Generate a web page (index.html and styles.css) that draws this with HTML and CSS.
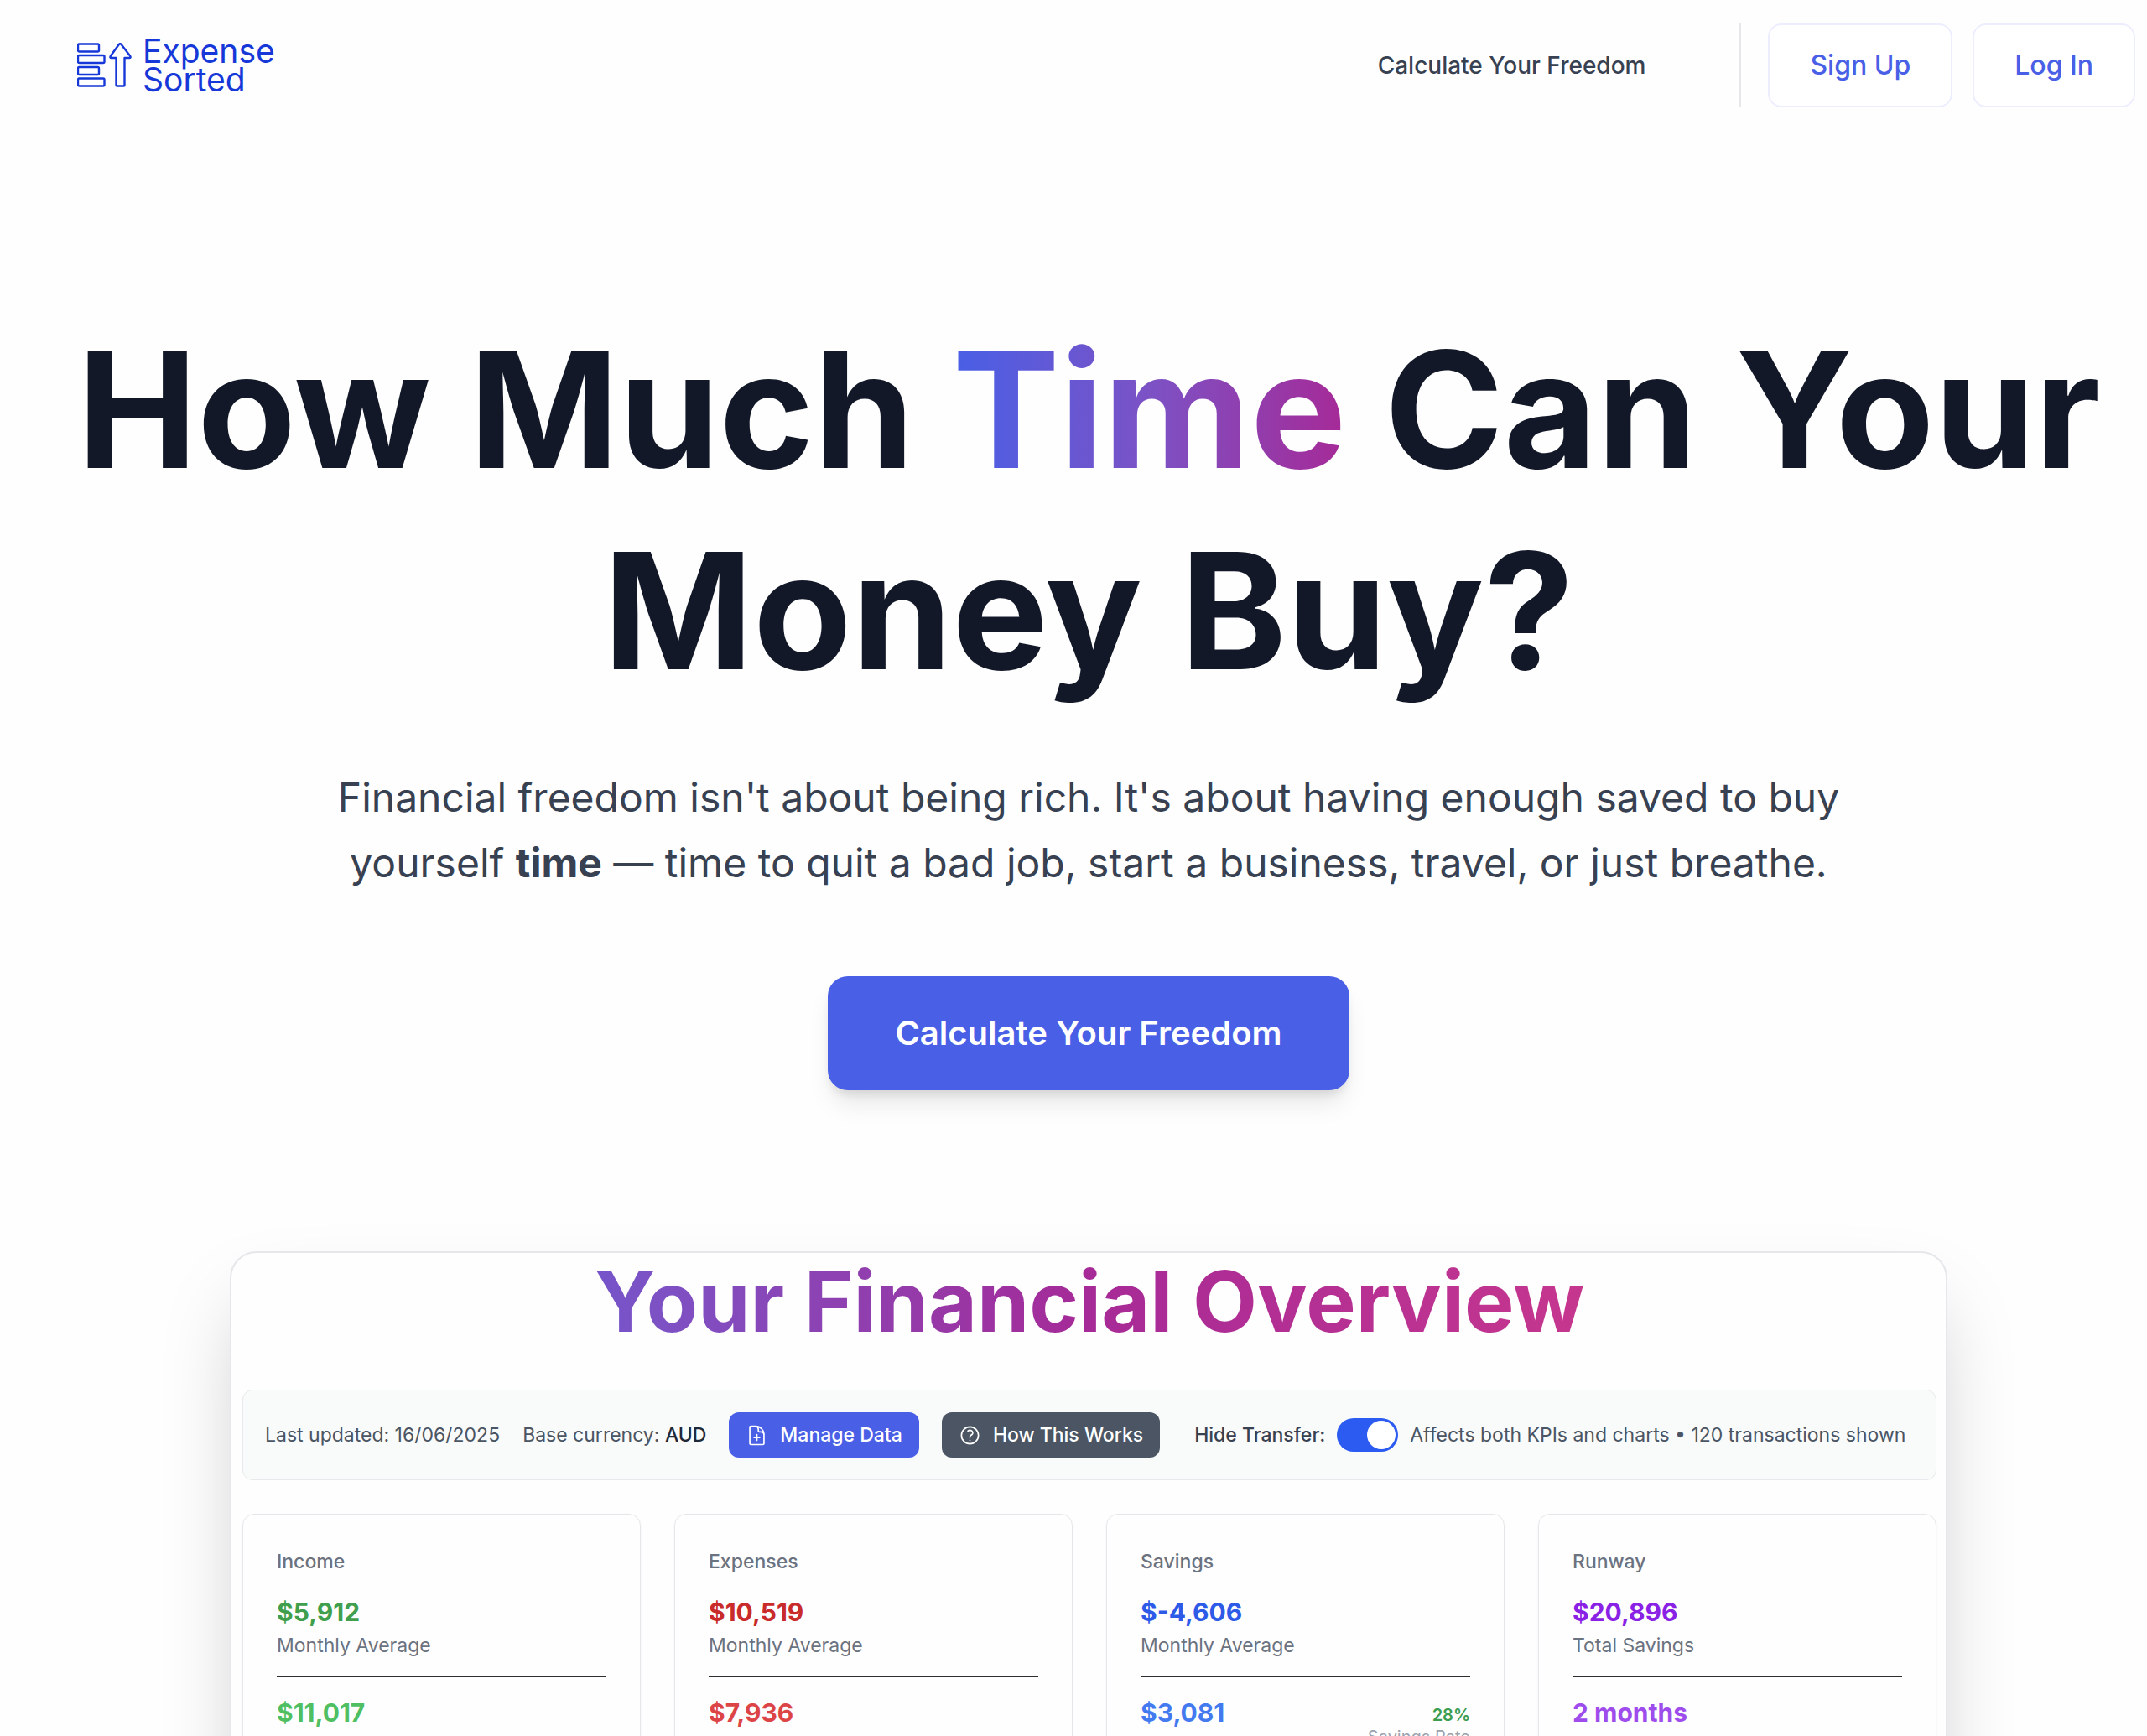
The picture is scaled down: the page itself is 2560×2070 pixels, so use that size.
FILE: index.html
```html
<!DOCTYPE html>
<html lang="en">
<head>
<meta charset="utf-8">
<meta name="viewport" content="width=device-width, initial-scale=1">
<title>Expense Sorted</title>
<link rel="stylesheet" href="styles.css">
</head>
<body>
<header class="header">
  <a class="logo" href="#">
    <svg class="logo-mark" viewBox="0 0 66 54" fill="none" stroke="currentColor" stroke-width="2.4" stroke-linejoin="round" aria-hidden="true">
      <rect x="1" y="1.5" width="25" height="9" rx="1.5"/>
      <rect x="1" y="15" width="31.5" height="9" rx="1.5"/>
      <rect x="1" y="29" width="25" height="9" rx="1.5"/>
      <rect x="1" y="42.5" width="31.5" height="9" rx="1.5"/>
      <path d="M50 1.8Q51.200 .6 52.400 1.800L63 15.500Q64.500 18 62.500 18H56.500V50.500Q56.500 51.500 55.500 51.500H47.500Q46.500 51.500 46.500 50.500V18H40.500Q38.500 18 40 15.500Z"/>
    </svg>
    <span class="logo-text">Expense<br>Sorted</span>
  </a>
  <nav class="nav">
    <a class="nav-link" href="#">Calculate Your Freedom</a>
    <div class="auth">
      <button class="auth-button" type="button">Sign Up</button>
      <button class="auth-button" type="button">Log In</button>
    </div>
  </nav>
</header>

<main class="main">
  <section class="hero">
    <h1 class="hero-title">How Much <span class="hero-accent">Time</span> Can Your Money Buy?</h1>
    <p class="hero-text">Financial freedom isn't about being rich. It's about having enough saved to buy yourself <strong>time</strong> — time to quit a bad job, start a business, travel, or just breathe.</p>
    <button class="cta" type="button">Calculate Your Freedom</button>
  </section>

  <section class="overview">
    <h2 class="overview-title">Your Financial Overview</h2>
    <div class="toolbar">
      <span>Last updated: 16/06/2025</span>
      <span>Base currency: <b class="currency">AUD</b></span>
      <button class="tool tool-primary" type="button">
        <svg class="tool-icon" viewBox="0 0 24 24" fill="none" stroke="currentColor" stroke-width="1.5" stroke-linecap="round" stroke-linejoin="round" aria-hidden="true"><path d="M19.500 14.250v-2.625a3.375 3.375 0 0 0-3.375-3.375h-1.500A1.125 1.125 0 0 1 13.500 7.125v-1.500a3.375 3.375 0 0 0-3.375-3.375H8.250m3.750 9v6m3-3H9m1.500-12H5.625c-.621 0-1.125.504-1.125 1.125v17.250c0 .621.504 1.125 1.125 1.125h12.750c.621 0 1.125-.504 1.125-1.125V11.250a9 9 0 0 0-9-9Z"/></svg>
        Manage Data
      </button>
      <button class="tool tool-dark" type="button">
        <svg class="tool-icon" viewBox="0 0 24 24" fill="none" stroke="currentColor" stroke-width="1.5" stroke-linecap="round" stroke-linejoin="round" aria-hidden="true"><path d="M9.879 7.519c1.171-1.025 3.071-1.025 4.242 0 1.172 1.025 1.172 2.687 0 3.712-.203.179-.430.326-.670.442-.745.361-1.450.999-1.450 1.827v.750M21 12a9 9 0 1 1-18 0 9 9 0 0 1 18 0Zm-9 5.250h.008v.008H12v-.008Z"/></svg>
        How This Works
      </button>
      <div class="transfer">
        <label class="transfer-label" for="hide-transfer">Hide Transfer:</label>
        <input class="switch" id="hide-transfer" type="checkbox" checked>
        <span>Affects both KPIs and charts • 120 transactions shown</span>
      </div>
    </div>

    <div class="kpis">
      <article class="kpi">
        <h3 class="kpi-name">Income</h3>
        <p class="kpi-value green">$5,912</p>
        <p class="kpi-note">Monthly Average</p>
        <div class="kpi-second"><p class="kpi-value green-light">$11,017</p></div>
      </article>
      <article class="kpi">
        <h3 class="kpi-name">Expenses</h3>
        <p class="kpi-value red">$10,519</p>
        <p class="kpi-note">Monthly Average</p>
        <div class="kpi-second"><p class="kpi-value red-light">$7,936</p></div>
      </article>
      <article class="kpi">
        <h3 class="kpi-name">Savings</h3>
        <p class="kpi-value blue">$-4,606</p>
        <p class="kpi-note">Monthly Average</p>
        <div class="kpi-second">
          <p class="kpi-value blue-light">$3,081</p>
          <p class="rate"><b class="rate-value">28%</b>Savings Rate</p>
        </div>
      </article>
      <article class="kpi">
        <h3 class="kpi-name">Runway</h3>
        <p class="kpi-value purple">$20,896</p>
        <p class="kpi-note">Total Savings</p>
        <div class="kpi-second"><p class="kpi-value purple-light">2 months</p></div>
      </article>
    </div>
  </section>
</main>
</body>
</html>
```
FILE: styles.css
```css
* {
  box-sizing: border-box;
}

body {
  margin: 0;
  height: 100vh;
  overflow: hidden;
  background: #fefefe;
  color: #374151;
  font-family: Inter, "Liberation Sans", sans-serif;
}

h1, h2, h3, p {
  margin: 0;
}

button {
  font-family: inherit;
  cursor: pointer;
}

a {
  color: inherit;
  text-decoration: none;
}

.header {
  display: flex;
  align-items: center;
  justify-content: space-between;
  padding: 28px 14px 28px 92px;
}

.logo {
  display: flex;
  align-items: center;
  gap: 12px;
  color: #1638d8;
}

.logo-mark {
  width: 66px;
  height: 54px;
}

.logo-text {
  font-size: 39px;
  line-height: 34px;
}

.nav {
  display: flex;
  align-items: center;
  gap: 112px;
}

.nav-link {
  font-size: 28px;
  font-weight: 500;
}

.auth {
  display: flex;
  gap: 24px;
  padding-left: 32px;
  border-left: 2px solid #e5e7eb;
}

.auth-button {
  height: 100px;
  padding: 0 48px 2px;
  border: 2px solid #eceefe;
  border-radius: 16px;
  background: #fff;
  color: #485fe6;
  font-size: 32px;
  font-weight: 500;
}

.main {
  padding: 212px 44px 0 80px;
}

.hero {
  display: flex;
  flex-direction: column;
  align-items: center;
  text-align: center;
}

.hero-title {
  color: #121827;
  font-size: 192px;
  font-weight: 700;
  line-height: 240px;
}

.hero-accent {
  background: linear-gradient(to right, #485fe6, #7c52c5 50%, #a62a97);
  background-clip: text;
  -webkit-background-clip: text;
  color: transparent;
}

.hero-text {
  max-width: 1800px;
  margin-top: 64px;
  font-size: 48px;
  line-height: 78px;
}

.hero-text strong {
  font-weight: 700;
}

.cta {
  height: 136px;
  margin-top: 96px;
  padding: 0 80px 2px;
  border: 0;
  border-radius: 24px;
  background: #485fe6;
  box-shadow: 0 20px 30px -6px rgba(0, 0, 0, 0.1), 0 8px 12px -4px rgba(0, 0, 0, 0.1);
  color: #fff;
  font-size: 40px;
  font-weight: 600;
}

.overview {
  max-width: 2048px;
  margin: 192px auto 0;
  padding: 0 11px 40px 13px;
  border: 2px solid #e5e7eb;
  border-radius: 32px;
  background: #fefefe;
  box-shadow: 0 50px 100px -24px rgba(0, 0, 0, 0.25);
}

.overview-title {
  padding-bottom: 47px;
  background: linear-gradient(to right, #485fe6, #7c52c5 24%, #a62a97 50%, #dc3f88);
  background-clip: text;
  -webkit-background-clip: text;
  color: transparent;
  font-size: 100px;
  font-weight: 700;
  line-height: 116px;
  text-align: center;
}

.toolbar {
  display: flex;
  align-items: center;
  gap: 27px;
  height: 108px;
  padding: 0 26px;
  border: 1px solid #e7e9ec;
  border-radius: 12px;
  background: #f9fafa;
  color: #4b5563;
  font-size: 23px;
  white-space: nowrap;
}

.currency {
  color: #1f2937;
  font-weight: 500;
}

.tool {
  display: flex;
  align-items: center;
  gap: 14px;
  height: 54px;
  padding: 0 20px;
  border: 0;
  border-radius: 12px;
  color: #fff;
  font-size: 23px;
  font-weight: 500;
}

.tool-primary {
  background: #485fe6;
}

.tool-dark {
  background: #4b5563;
}

.tool-icon {
  width: 27px;
  height: 27px;
}

.transfer {
  display: flex;
  align-items: center;
  gap: 14px;
  margin-left: 14px;
}

.transfer-label {
  color: #374151;
  font-weight: 500;
}

.switch {
  display: flex;
  align-items: center;
  justify-content: flex-end;
  width: 73px;
  height: 40px;
  margin: 0;
  padding: 0 3px;
  border-radius: 20px;
  appearance: none;
  background: #2b5bf0;
}

.switch::before {
  width: 34px;
  height: 34px;
  border-radius: 50%;
  background: #fff;
  content: "";
}

.kpis {
  display: grid;
  grid-template-columns: repeat(4, 1fr);
  gap: 40px;
  margin-top: 40px;
}

.kpi {
  padding: 40px 40px 60px;
  border: 1px solid #e5e7eb;
  border-radius: 14px;
  box-shadow: 0 1px 3px rgba(0, 0, 0, 0.06);
}

.kpi-name,
.kpi-note {
  color: #6b7280;
  font-size: 23px;
  font-weight: 400;
  line-height: 32px;
}

.kpi-name {
  margin-bottom: 20px;
  font-weight: 500;
}

.kpi-value {
  font-size: 30px;
  font-weight: 700;
  line-height: 48px;
}

.kpi-second {
  display: flex;
  justify-content: space-between;
  margin-top: 20px;
  padding-top: 18px;
  border-top: 2px solid #2b2d31;
}

.rate {
  padding-top: 14px;
  color: #9ca3af;
  font-size: 20px;
  line-height: 26px;
  text-align: right;
}

.rate-value {
  display: block;
  color: #3b9d4f;
  font-weight: 600;
}

.green { color: #3f9f4c; }
.green-light { color: #4fbf62; }
.red { color: #c92a2a; }
.red-light { color: #dc4446; }
.blue { color: #2d5be8; }
.blue-light { color: #437af0; }
.purple { color: #8a22e6; }
.purple-light { color: #9e4cec; }
```
